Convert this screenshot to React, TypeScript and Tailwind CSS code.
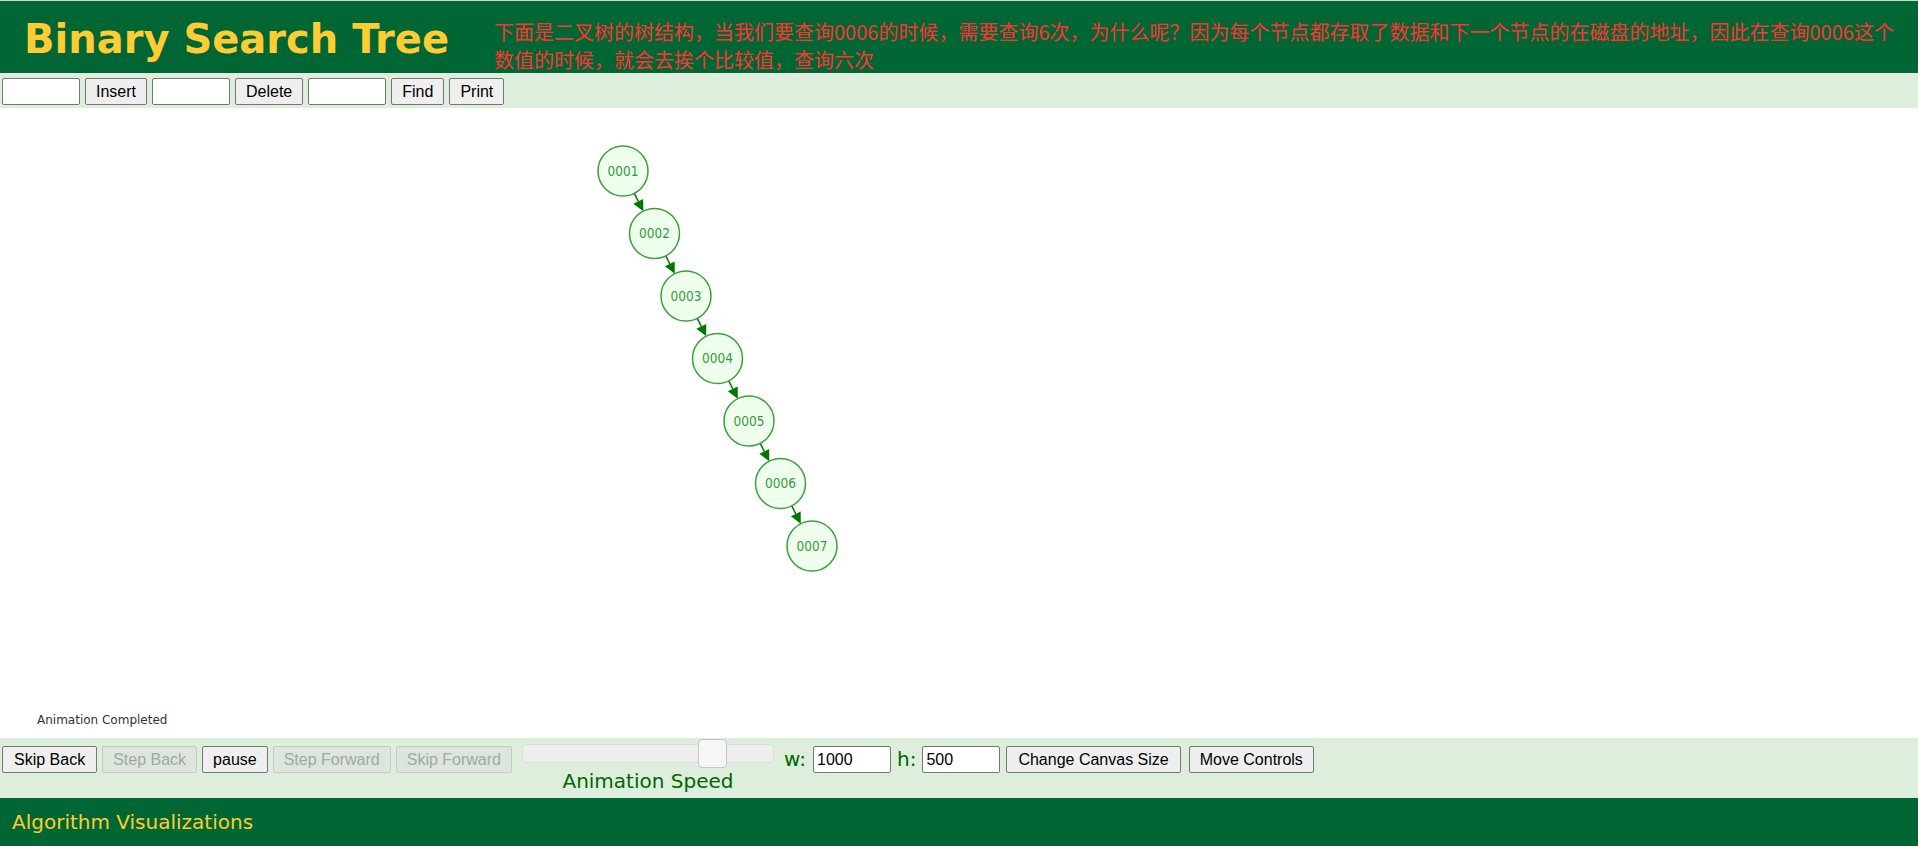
import React from "react";

const NODES = ["0001", "0002", "0003", "0004", "0005", "0006", "0007"];
const R = 25;

function Tree() {
  const pts = NODES.map((label, i) => ({ label, x: 623 + 31.5 * i, y: 63 + 62.5 * i }));

  return (
    <svg width="1918" height="630" className="absolute inset-0">
      {pts.slice(0, -1).map((a, i) => {
        const b = pts[i + 1];
        const dx = b.x - a.x;
        const dy = b.y - a.y;
        const len = Math.hypot(dx, dy);
        const ux = dx / len;
        const uy = dy / len;
        const sx = a.x + R * ux;
        const sy = a.y + R * uy;
        const tx = b.x - R * ux;
        const ty = b.y - R * uy;
        const bx = tx - 11 * ux;
        const by = ty - 11 * uy;
        const px = -uy * 5.5;
        const py = ux * 5.5;
        return (
          <g key={i}>
            <line x1={sx} y1={sy} x2={bx} y2={by} stroke="#007700" strokeWidth="1.5" />
            <polygon
              points={`${tx},${ty} ${bx + px},${by + py} ${bx - px},${by - py}`}
              fill="#007700"
            />
          </g>
        );
      })}
      {pts.map((p) => (
        <g key={p.label}>
          <circle cx={p.x} cy={p.y} r={R} fill="#eeffee" stroke="#3d9e3d" strokeWidth="1.5" />
          <text
            x={p.x}
            y={p.y + 4.5}
            textAnchor="middle"
            fontSize="13.5"
            fill="#3a973a"
            fontFamily="'DejaVu Sans Condensed', 'DejaVu Sans', sans-serif"
          >
            {p.label}
          </text>
        </g>
      ))}
      <text x="37" y="616" fontSize="12" fill="#333333" fontFamily="'DejaVu Sans', sans-serif">
        Animation Completed
      </text>
    </svg>
  );
}

const btn =
  "h-[27px] px-[10px] bg-[#efefef] border border-[#767676] rounded-[2px] text-[16px] text-black leading-none font-['Liberation_Sans',Arial,sans-serif]";
const btnOff =
  "h-[27px] px-[10px] bg-[#dce6dc] border border-[#c3cdc3] rounded-[2px] text-[16px] text-[#a3a8a3] leading-none font-['Liberation_Sans',Arial,sans-serif]";
const field =
  "w-[78px] h-[27px] bg-white border border-[#767676] rounded-[2px] px-[3px] text-[16px] text-black font-['Liberation_Sans',Arial,sans-serif] outline-none";

export default function App() {
  return (
    <div className="w-[1918px] h-[846px] flex flex-col bg-white overflow-hidden">
      <header className="h-[73px] bg-[#006633] border-t border-[#d4d4d4] flex items-start">
        <h1 className="w-[494px] pl-[24px] pt-[14px] text-[40px] leading-[48px] font-bold text-[#ffcc33] whitespace-nowrap font-['DejaVu_Sans',sans-serif]">
          Binary Search Tree
        </h1>
        <div className="pt-[17px] text-[20px] leading-[28px] text-[#ff3333] whitespace-nowrap font-['Noto_Sans_CJK_SC',sans-serif]">
          <div>
            下面是二叉树的树结构，当我们要查询0006的时候，需要查询6次，为什么呢？因为每个节点都存取了数据和下一个节点的在磁盘的地址，因此在查询0006这个
          </div>
          <div>数值的时候，就会去挨个比较值，查询六次</div>
        </div>
      </header>

      <div className="h-[35px] bg-[#ddeedd] flex items-start gap-[5px] pl-[2px] pt-[5px]">
        <input className={field} />
        <button className={btn}>Insert</button>
        <input className={field} />
        <button className={btn}>Delete</button>
        <input className={field} />
        <button className={btn}>Find</button>
        <button className={btn}>Print</button>
      </div>

      <div className="relative h-[630px] bg-white">
        <Tree />
      </div>

      <div className="h-[60px] bg-[#ddeedd] flex items-start pl-[2px] pt-[8px]">
        <div className="flex gap-[5px]">
          <button className={`${btn} px-[11px]`}>Skip Back</button>
          <button className={btnOff} disabled>
            Step Back
          </button>
          <button className={btn}>pause</button>
          <button className={btnOff} disabled>
            Step Forward
          </button>
          <button className={btnOff} disabled>
            Skip Forward
          </button>
        </div>
        <div className="ml-[10px] -mt-[2px] flex flex-col items-center">
          <div className="relative w-[252px] h-[19px] bg-[#eeeeee] border border-[#dddddd] rounded-[5px]">
            <div className="absolute left-[175px] -top-[6px] w-[29px] h-[29px] bg-[#f6f6f6] border border-[#c5c5c5] rounded-[4px]" />
          </div>
          <span className="mt-[6px] text-[20px] leading-[24px] text-[#006600] font-['DejaVu_Sans',sans-serif]">
            Animation Speed
          </span>
        </div>
        <span className="ml-[10px] text-[20px] leading-[27px] text-[#006600] font-['DejaVu_Sans',sans-serif]">
          w:
        </span>
        <input className={`${field} ml-[7px]`} defaultValue="1000" />
        <span className="ml-[6px] text-[20px] leading-[27px] text-[#006600] font-['DejaVu_Sans',sans-serif]">
          h:
        </span>
        <input className={`${field} ml-[6px]`} defaultValue="500" />
        <div className="ml-[6px] flex gap-[8px]">
          <button className={`${btn} px-[11px]`}>Change Canvas Size</button>
          <button className={btn}>Move Controls</button>
        </div>
      </div>

      <footer className="h-[48px] bg-[#006633] flex items-center pl-[12px]">
        <span className="text-[20px] leading-[24px] text-[#ffcc33] font-['DejaVu_Sans',sans-serif]">
          Algorithm Visualizations
        </span>
      </footer>
    </div>
  );
}
